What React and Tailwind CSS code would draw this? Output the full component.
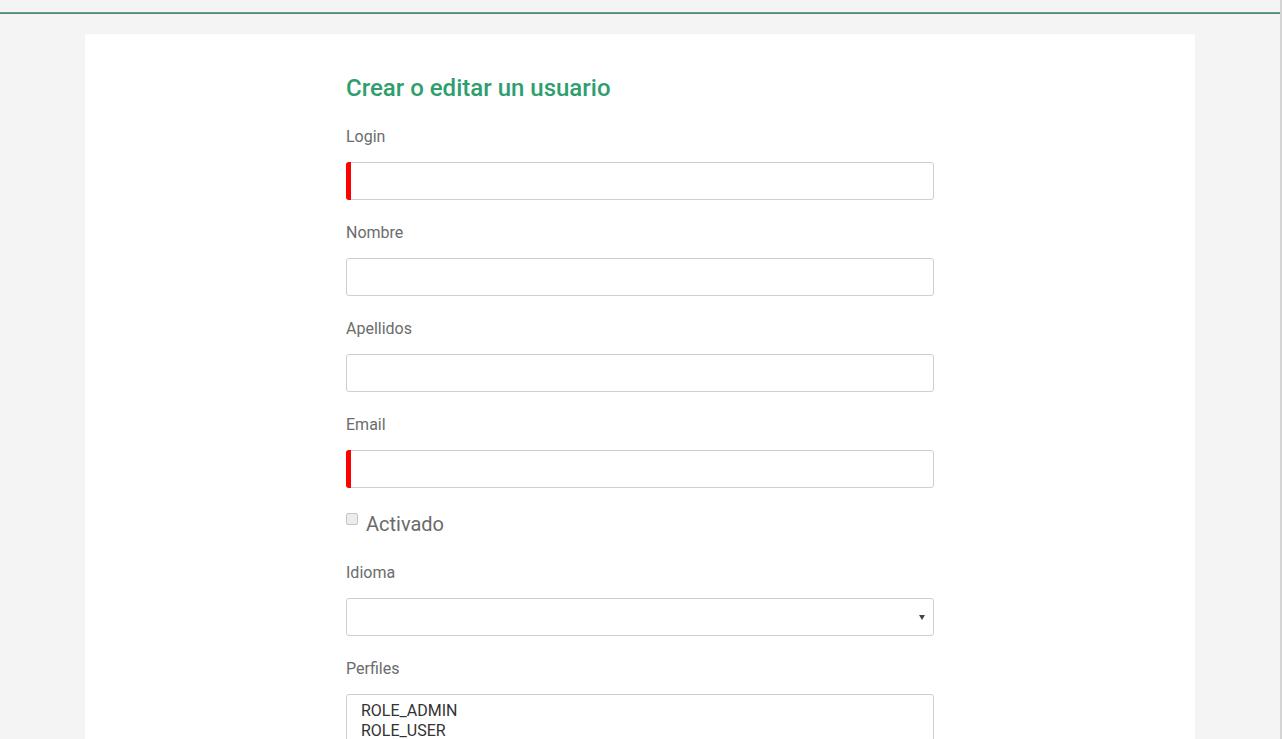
import React from 'react';

function Field({ label, required }) {
  return (
    <div className="mb-[22px]">
      <label className="block text-[16px] leading-[22px] text-[#6b6b6b] mb-[14px]">{label}</label>
      <div className="relative">
        {required && (
          <span className="absolute left-0 top-0 h-full w-[5px] bg-[#ff0000] rounded-l-[3px]"></span>
        )}
        <input
          type="text"
          className="block w-full h-[38px] border border-[#ccced2] rounded-[3px] bg-white px-3 outline-none"
        />
      </div>
    </div>
  );
}

export default function App() {
  return (
    <div className="min-h-screen bg-[#f4f4f4] border-r-2 border-[#d4d4d4] font-['Roboto','Liberation_Sans',sans-serif]">
      {/* top bar */}
      <div className="h-[12px]"></div>
      <div className="h-px bg-[#8a8a8a]"></div>
      <div className="h-px bg-[#2e9e6e]"></div>

      <div className="pt-[20px]">
        <div className="mx-auto w-[1110px] bg-white rounded-t-[3px] pt-[40px] pb-10">
          <div className="mx-auto w-[588px]">
            <h2 className="text-[24px] leading-[28px] font-medium text-[#2e9e6e]">Crear o editar un usuario</h2>

            <div className="mt-[24px]">
              <Field label="Login" required />
              <Field label="Nombre" />
              <Field label="Apellidos" />
              <Field label="Email" required />
            </div>

            {/* activado */}
            <div className="flex items-start mt-[2px]">
              <span className="mt-[3px] w-[12px] h-[12px] border border-[#c4c4c4] rounded-[2px] bg-[#ececec]"></span>
              <span className="ml-[8px] text-[20px] leading-[28px] text-[#6b6b6b]">Activado</span>
            </div>

            <div className="mt-[24px] mb-[22px]">
              <label className="block text-[16px] leading-[22px] text-[#6b6b6b] mb-[14px]">Idioma</label>
              <div className="relative h-[38px] border border-[#ccced2] rounded-[3px] bg-white">
                <svg className="absolute right-[8px] top-[15px]" width="6" height="6" viewBox="0 0 6 6">
                  <polygon points="0,1 6,1 3,6" fill="#444" />
                </svg>
              </div>
            </div>

            <div>
              <label className="block text-[16px] leading-[22px] text-[#6b6b6b] mb-[14px]">Perfiles</label>
              <div className="h-[100px] border border-[#ccced2] rounded-[3px] bg-white pt-[6px] pl-[14px] text-[16px] leading-[20px] text-[#333]">
                <div>ROLE_ADMIN</div>
                <div>ROLE_USER</div>
              </div>
            </div>
          </div>
        </div>
      </div>
    </div>
  );
}
